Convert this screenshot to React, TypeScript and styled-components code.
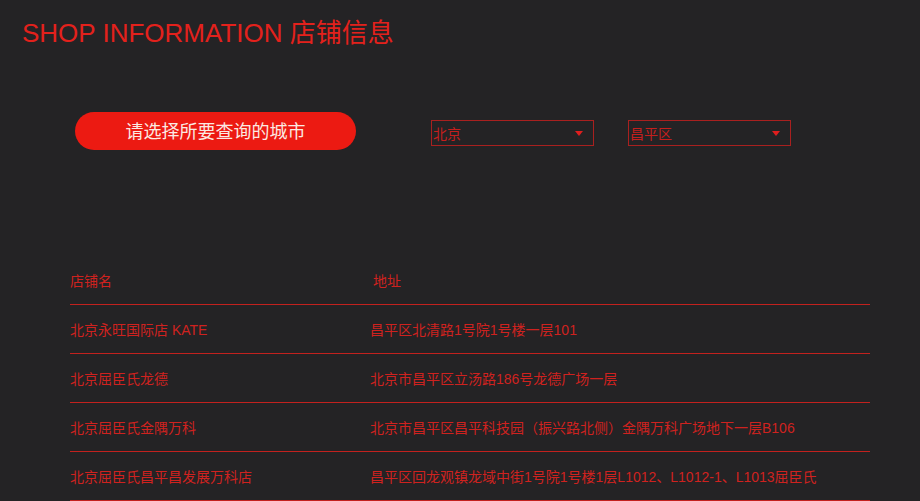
import { FC } from 'react';
import styled, { createGlobalStyle } from 'styled-components';

const GlobalStyle = createGlobalStyle`
    html, body {
        margin: 0;
        padding: 0;
        background: #242325;
    }
    body {
        font-family: "Liberation Sans", Arial, "Noto Sans CJK SC", sans-serif;
    }
`;

const Page = styled.div`
    width: 920px;
    height: 501px;
    overflow: hidden;
    background: #242325;
    padding: 17px 0 0 22px;
    box-sizing: border-box;
`;

const Title = styled.h1`
    margin: 0;
    font-size: 26px;
    line-height: 32px;
    font-weight: normal;
    color: #e3211c;
`;

const FilterBar = styled.div`
    display: flex;
    align-items: flex-start;
    height: 38px;
    margin: 63px 0 0 53px;
`;

const CityButton = styled.button`
    width: 281px;
    height: 38px;
    border: none;
    border-radius: 19px;
    background: #ec1a12;
    color: #fbe9e2;
    font-family: "Liberation Sans", "Noto Sans CJK SC", sans-serif;
    font-size: 18px;
    padding: 0 0 3px;
    cursor: pointer;
`;

const Select = styled.div<{ $gap: number }>`
    display: flex;
    align-items: center;
    justify-content: space-between;
    box-sizing: border-box;
    width: 163px;
    height: 26px;
    margin: 8px 0 0 ${({ $gap }) => $gap}px;
    border: 1px solid #a9201f;
    padding: 0 10px 0 1px;
    color: #c51f1d;
    font-size: 14px;
    font-family: "Liberation Sans", "Noto Sans CJK SC", sans-serif;
`;

const Caret = styled.span`
    width: 0;
    height: 0;
    border-left: 4px solid transparent;
    border-right: 4px solid transparent;
    border-top: 5px solid #e01e1e;
`;

const Table = styled.div`
    width: 800px;
    margin: 106px 0 0 48px;
`;

const Row = styled.div<{ $head?: boolean }>`
    display: grid;
    grid-template-columns: ${({ $head }) => ($head ? '303px' : '300px')} 1fr;
    align-items: center;
    box-sizing: border-box;
    height: 49px;
    border-bottom: 1px solid #c3211e;
    color: #cf221f;
    font-size: 14px;
    font-family: "Liberation Sans", "Noto Sans CJK SC", sans-serif;
`;

const Cell = styled.div`
    white-space: nowrap;
`;

const shops = [
    ['北京永旺国际店 KATE', '昌平区北清路1号院1号楼一层101'],
    ['北京屈臣氏龙德', '北京市昌平区立汤路186号龙德广场一层'],
    ['北京屈臣氏金隅万科', '北京市昌平区昌平科技园（振兴路北侧）金隅万科广场地下一层B106'],
    ['北京屈臣氏昌平昌发展万科店', '昌平区回龙观镇龙域中街1号院1号楼1层L1012、L1012-1、L1013屈臣氏'],
];

const App: FC = () => (
    <Page>
        <GlobalStyle />
        <Title>SHOP INFORMATION 店铺信息</Title>
        <FilterBar>
            <CityButton>请选择所要查询的城市</CityButton>
            <Select $gap={75}>
                北京
                <Caret />
            </Select>
            <Select $gap={34}>
                昌平区
                <Caret />
            </Select>
        </FilterBar>
        <Table>
            <Row $head>
                <Cell>店铺名</Cell>
                <Cell>地址</Cell>
            </Row>
            {shops.map(([name, addr]) => (
                <Row key={name}>
                    <Cell>{name}</Cell>
                    <Cell>{addr}</Cell>
                </Row>
            ))}
        </Table>
    </Page>
);

export default App;
